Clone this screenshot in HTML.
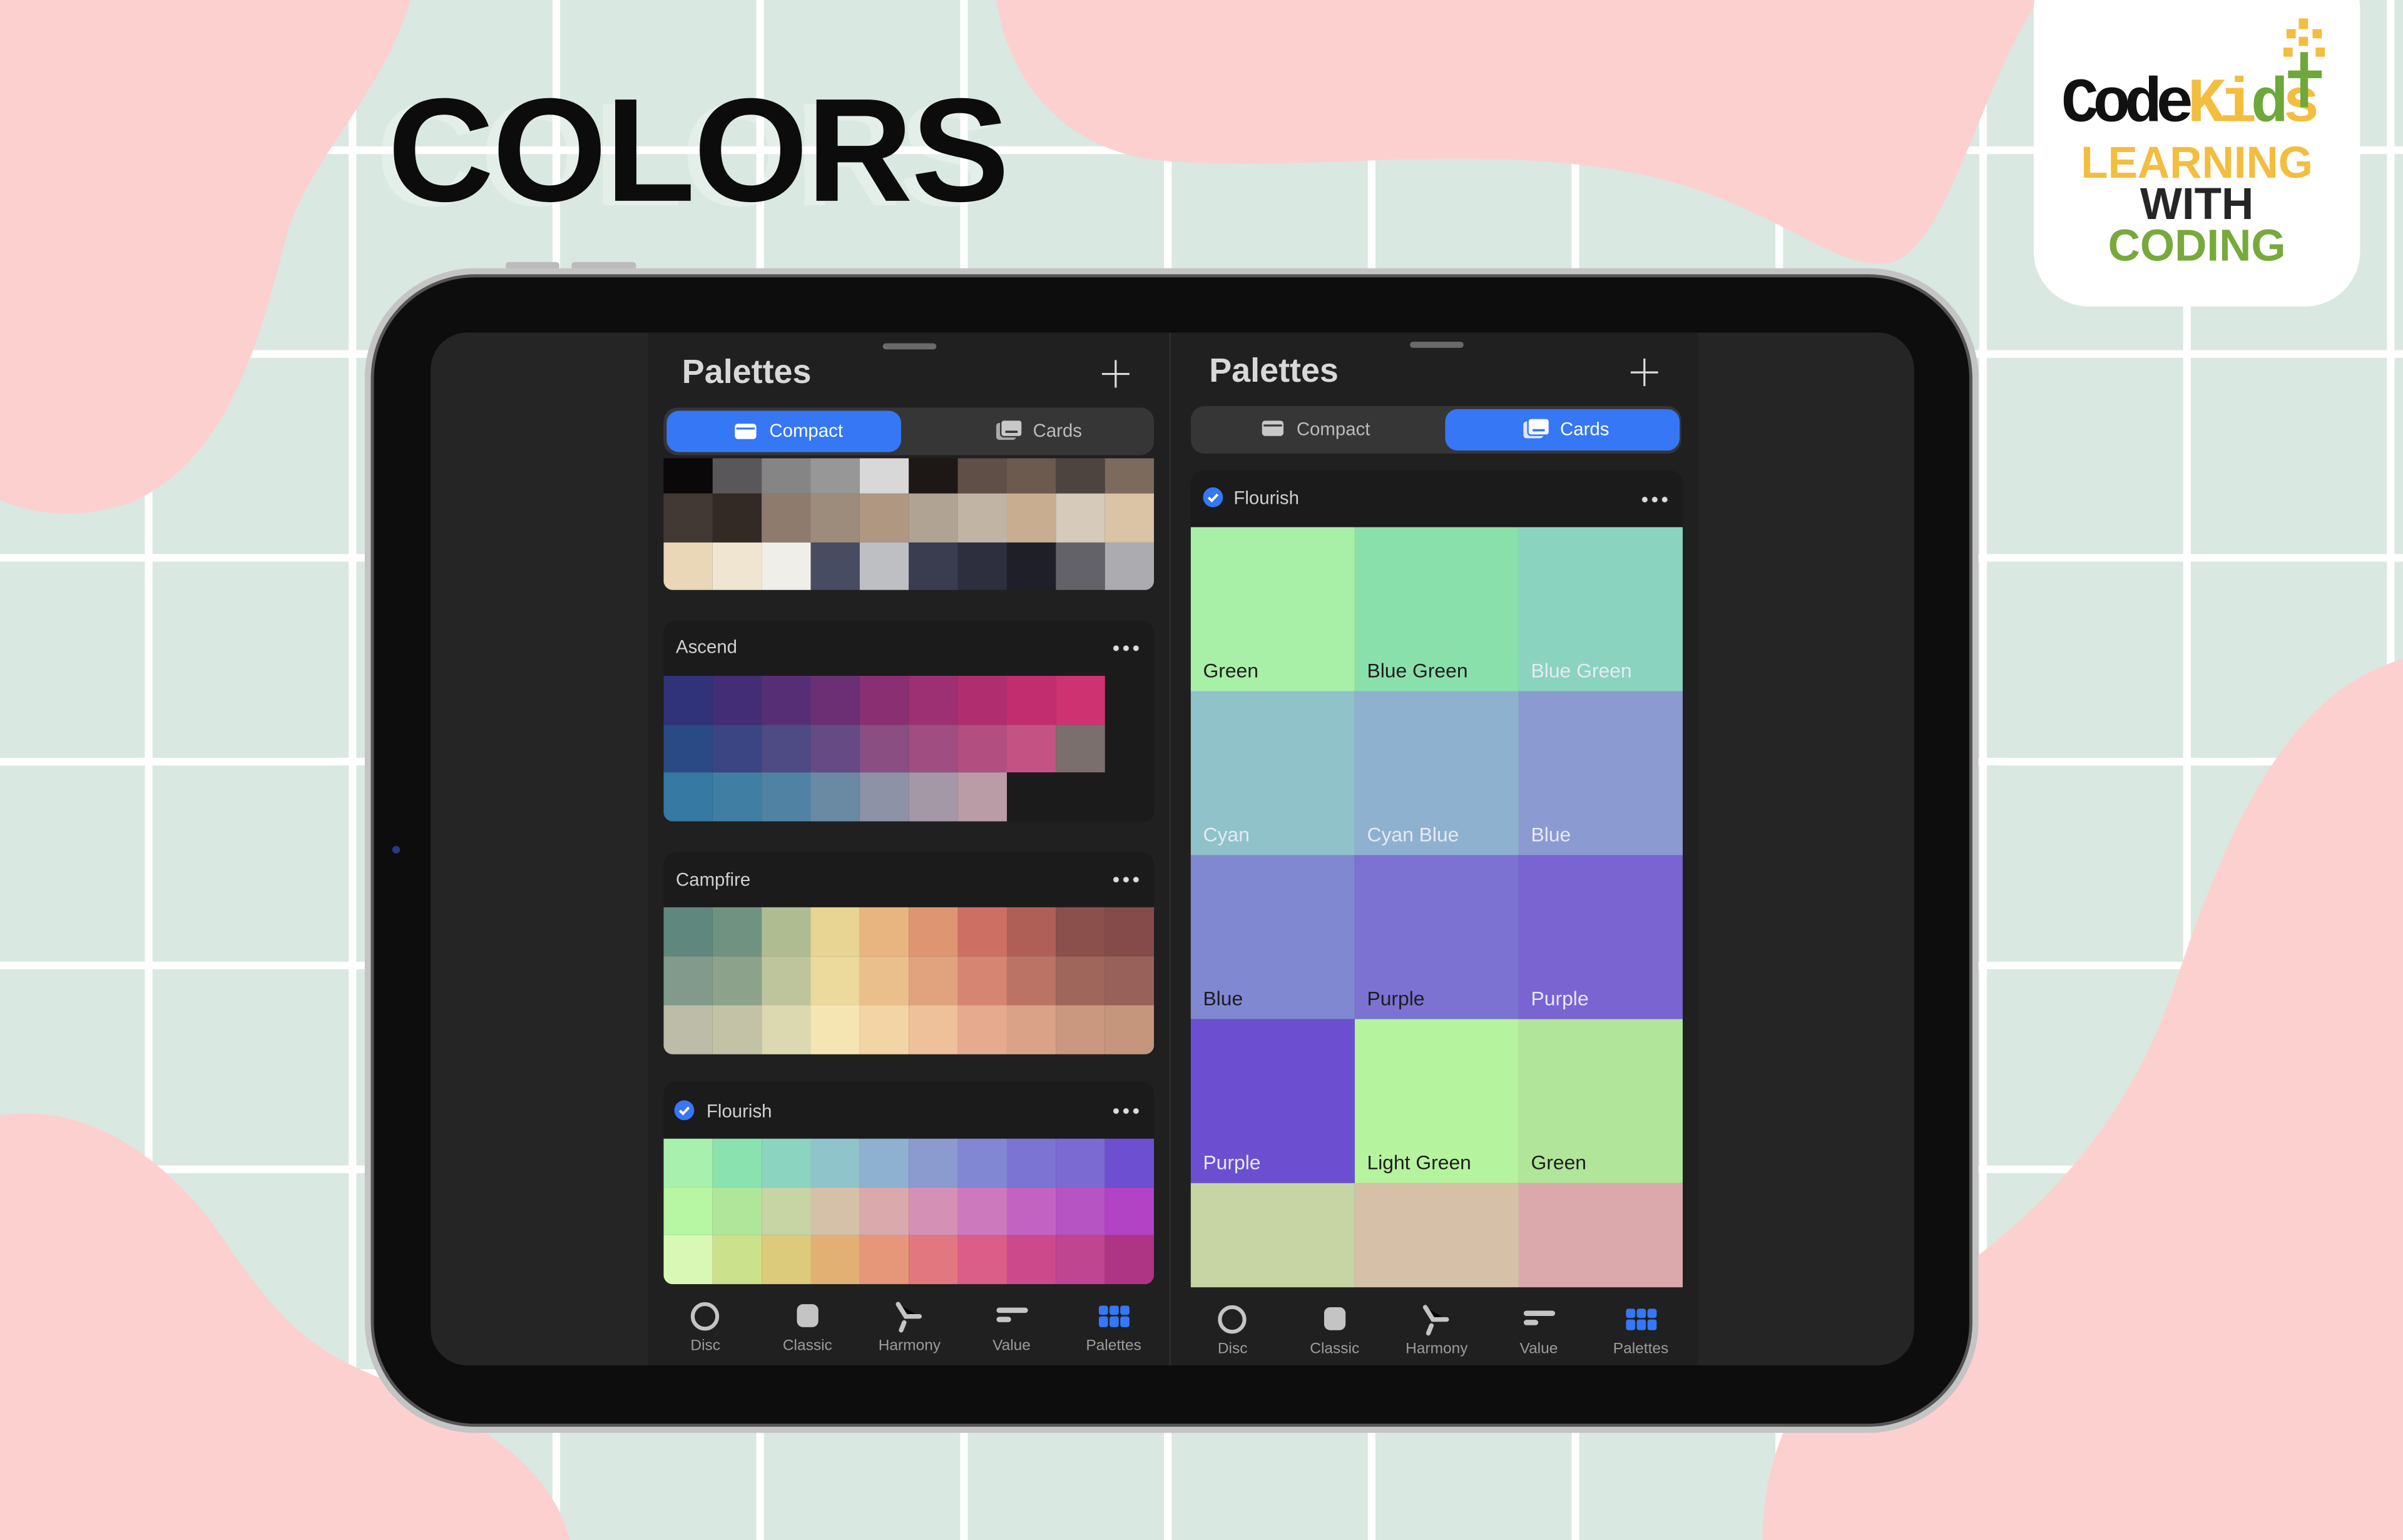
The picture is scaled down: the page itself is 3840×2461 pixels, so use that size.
<!DOCTYPE html>
<html><head><meta charset="utf-8"><style>
*{margin:0;padding:0;box-sizing:border-box}
html,body{width:3840px;height:2460px;overflow:hidden;background:#d9e8e0}
#w{position:absolute;left:0;top:0;width:1568px;height:1005px;transform:scale(2.44898);transform-origin:0 0;font-family:"Liberation Sans",sans-serif;overflow:hidden}
.a{position:absolute}
.g{position:absolute;display:grid;grid-template-columns:repeat(10,1fr);overflow:hidden;border-radius:0 0 6px 6px}
.hd{position:absolute;background:#1b1b1b;border-radius:8px 8px 0 0;color:#d0d0d0;font-size:12px}
.dots{position:absolute;right:9px;top:50%;margin-top:-2px;width:19px;height:4px;background:radial-gradient(circle,#ddd 1.6px,transparent 2px) 0 0/6.5px 4px repeat-x}
.nav{position:absolute;display:flex;justify-content:space-around;color:#9c9c9c;font-size:10px;text-align:center}
.nav div{width:60px;display:flex;flex-direction:column;align-items:center}
.nav svg{height:22px;margin-bottom:3px}
.cd{position:relative;font-size:13px;color:#1d1d1d}
.cd span{position:absolute;left:8px;bottom:6px}
.lt{color:#e6e9f5!important}
</style></head><body><div id="w">
<svg class="a" style="left:0;top:0" width="1568" height="1005" viewBox="0 0 1568 1005">
<g stroke="#fff" stroke-width="5">
<path d="M97 0V1005M230 0V1005M363 0V1005M496 0V1005M629 0V1005M762 0V1005M895 0V1005M1028 0V1005M1161 0V1005M1294 0V1005M1427 0V1005M1560 0V1005"/>
<path d="M0 98H1568M0 231H1568M0 364H1568M0 497H1568M0 630H1568M0 763H1568M0 896H1568"/>
</g>
<g fill="#fdd0d0">
<path d="M0,0 L268,0 C250,60 205,100 188,150 C170,220 150,300 85,328 C45,342 12,332 0,326 Z"/>
<path d="M650,0 C660,60 700,100 760,105 C850,112 950,95 1050,110 C1150,125 1190,175 1230,172 C1270,168 1290,60 1330,0 Z"/>
<path d="M1568,430 C1500,450 1460,520 1420,640 C1380,760 1300,820 1200,880 C1160,920 1150,970 1150,1005 L1568,1005 Z"/>
<path d="M0,728 C60,718 110,760 140,800 C180,860 200,880 250,900 C320,930 360,960 372,1005 L0,1005 Z"/>
</g>
</svg>
<div class="a" style="left:253px;top:44px;font-size:96px;font-weight:bold;letter-spacing:-1px;color:#0c0c0c;text-shadow:-8px 3px 0 rgba(255,255,255,.3)">COLORS</div>
<!-- logo -->
<div class="a" style="left:1327px;top:-30px;width:213px;height:230px;background:#fff;border-radius:36px"></div>
<div class="a" style="left:1345px;top:46px;font-family:'Liberation Mono',monospace;font-weight:bold;font-size:41px;letter-spacing:-4px;line-height:46px"><span style="color:#111">Code</span><span style="color:#f3bd3f">Ki</span><span style="color:#6ea73a">d</span><span style="color:#f3bd3f">s</span></div>
<svg class="a" style="left:1484px;top:10px" width="40" height="60"><g fill="#f3bd3f"><rect x="16" y="2" width="6" height="7"/><rect x="8" y="9" width="6" height="6"/><rect x="25" y="9" width="6" height="6"/><rect x="16" y="14" width="6" height="6"/><rect x="6" y="21" width="6" height="6"/><rect x="27" y="21" width="6" height="6"/></g><rect x="17" y="24" width="5" height="36" fill="#6ea73a"/><rect x="9" y="36" width="22" height="5" fill="#6ea73a"/></svg>
<div class="a" style="left:1327px;width:213px;top:94px;text-align:center;font-weight:bold;font-size:29px;line-height:27px"><div style="color:#f3bd3f">LEARNING</div><div style="color:#262626">WITH</div><div style="color:#78a93c">CODING</div></div>
<!-- ipad -->
<div class="a" style="left:330px;top:171px;width:35px;height:5px;background:#bbb;border-radius:2px"></div>
<div class="a" style="left:373px;top:171px;width:42px;height:5px;background:#bbb;border-radius:2px"></div>
<div class="a" style="left:238px;top:175px;width:1053px;height:760px;border-radius:72px;background:#0d0d0d;border:4px solid #c4c4c4;box-shadow:inset 0 0 0 2px #555"></div>
<div class="a" style="left:256px;top:552px;width:5px;height:5px;border-radius:50%;background:#2a3a8a"></div>
<div class="a" style="left:281px;top:217px;width:968px;height:674px;border-radius:24px;background:#252525;overflow:hidden">
 <div class="a" style="left:142px;top:0;width:685px;height:674px;background:#202020"></div>
 <div class="a" style="left:482px;top:0;width:1px;height:674px;background:#2e2e2e"></div>
</div>
<!-- LEFT PANEL -->
<div class="a" style="left:576px;top:224px;width:35px;height:4px;border-radius:2px;background:#6a6a6a"></div>
<div class="a" style="left:445px;top:230px;font-size:22px;font-weight:bold;color:#d8d8d8">Palettes</div>
<svg class="a" style="left:719px;top:235px" width="18" height="18"><path d="M9 0V18M0 9H18" stroke="#ddd" stroke-width="1.3"/></svg>
<div class="a" style="left:433px;top:266px;width:320px;height:31px;border-radius:9px;background:#363636"></div>
<div class="a" style="left:435px;top:268px;width:153px;height:27px;border-radius:8px;background:#3577f5"></div>
<svg class="a" style="left:479px;top:276px" width="15" height="11"><rect x="0.5" y="0.5" width="14" height="10" rx="2" fill="#fff"/><rect x="1.5" y="3" width="12" height="1.3" fill="#3577f5"/></svg>
<div class="a" style="left:502px;top:274px;font-size:12px;color:#fff">Compact</div>
<svg class="a" style="left:650px;top:274px" width="17" height="14"><rect x="0" y="2" width="13" height="11" rx="2" fill="#aaa"/><rect x="3" y="0" width="14" height="11" rx="2" fill="#c8c8c8" stroke="#363636"/><rect x="6" y="7" width="8" height="1.5" fill="#363636"/></svg>
<div class="a" style="left:674px;top:274px;font-size:12px;color:#bbb">Cards</div>

<div class="g" style="left:433px;top:299px;width:320px;height:86px;grid-template-rows:23px 32px 31px">
<div style="background:#0b0809"></div><div style="background:#59575a"></div><div style="background:#858585"></div><div style="background:#979797"></div><div style="background:#d8d8d8"></div><div style="background:#1d1716"></div><div style="background:#604f46"></div><div style="background:#6c5a4f"></div><div style="background:#4d4440"></div><div style="background:#7c6a5d"></div>
<div style="background:#433934"></div><div style="background:#332925"></div><div style="background:#8f7b6d"></div><div style="background:#9d8b7c"></div><div style="background:#af9782"></div><div style="background:#b0a394"></div><div style="background:#c1b4a4"></div><div style="background:#c8ad90"></div><div style="background:#d6cbbb"></div><div style="background:#dbc3a5"></div>
<div style="background:#e9d7b8"></div><div style="background:#f0e5d0"></div><div style="background:#f0eee9"></div><div style="background:#484c63"></div><div style="background:#bebfc3"></div><div style="background:#3a3c50"></div><div style="background:#2d2e3e"></div><div style="background:#1f1f29"></div><div style="background:#636268"></div><div style="background:#acabb0"></div>
</div>

<div class="hd" style="left:433px;top:405px;width:320px;height:36px"><span class="a" style="left:8px;top:10px">Ascend</span><div class="dots"></div></div>
<div class="g" style="left:433px;top:441px;width:320px;height:95px;grid-template-rows:repeat(3,1fr);background:#1b1b1b">
<div style="background:#30337a"></div><div style="background:#432d76"></div><div style="background:#562e76"></div><div style="background:#6b2f74"></div><div style="background:#8a2f72"></div><div style="background:#9d3072"></div><div style="background:#b02e6f"></div><div style="background:#c22d70"></div><div style="background:#cf3270"></div><div></div>
<div style="background:#2a4a85"></div><div style="background:#3c4583"></div><div style="background:#4e4a83"></div><div style="background:#664a83"></div><div style="background:#8a4e83"></div><div style="background:#a04e82"></div><div style="background:#b24f80"></div><div style="background:#c45384"></div><div style="background:#7a6f6d"></div><div></div>
<div style="background:#3679a3"></div><div style="background:#407fa3"></div><div style="background:#5083a3"></div><div style="background:#6a89a3"></div><div style="background:#8e92a6"></div><div style="background:#a497a6"></div><div style="background:#b99ca6"></div><div></div><div></div><div></div>
</div>

<div class="hd" style="left:433px;top:556px;width:320px;height:36px"><span class="a" style="left:8px;top:11px">Campfire</span><div class="dots"></div></div>
<div class="g" style="left:433px;top:592px;width:320px;height:96px;grid-template-rows:repeat(3,1fr)">
<div style="background:#5f877d"></div><div style="background:#709281"></div><div style="background:#afbc91"></div><div style="background:#e8d493"></div><div style="background:#e8b47f"></div><div style="background:#de9672"></div><div style="background:#cd6f62"></div><div style="background:#b05f57"></div><div style="background:#8b4f4c"></div><div style="background:#844b4a"></div>
<div style="background:#819a8c"></div><div style="background:#8ca28b"></div><div style="background:#bec59c"></div><div style="background:#ecd99c"></div><div style="background:#ebbf8b"></div><div style="background:#e0a37e"></div><div style="background:#d58571"></div><div style="background:#bb7366"></div><div style="background:#9f665c"></div><div style="background:#98625a"></div>
<div style="background:#bcbca8"></div><div style="background:#c3c2a6"></div><div style="background:#dcd8b0"></div><div style="background:#f5e5b3"></div><div style="background:#f3d4a4"></div><div style="background:#eec19a"></div><div style="background:#e6ab8e"></div><div style="background:#daa388"></div><div style="background:#c9987e"></div><div style="background:#c5957c"></div>
</div>

<div class="hd" style="left:433px;top:706px;width:320px;height:37px"><svg class="a" style="left:7px;top:12px" width="13" height="13"><circle cx="6.5" cy="6.5" r="6.5" fill="#3577f5"/><path d="M3.6 6.7L5.7 8.7L9.5 4.6" stroke="#fff" stroke-width="1.6" fill="none"/></svg><span class="a" style="left:28px;top:12px">Flourish</span><div class="dots"></div></div>
<div class="g" style="left:433px;top:743px;width:320px;height:95px;grid-template-rows:repeat(3,1fr)">
<div style="background:#a8f0ae"></div><div style="background:#8ae2ae"></div><div style="background:#8ad4c0"></div><div style="background:#8fc4ca"></div><div style="background:#8fb1d1"></div><div style="background:#8b9bd0"></div><div style="background:#8187d2"></div><div style="background:#7b74d2"></div><div style="background:#7a6ad2"></div><div style="background:#6c50cf"></div>
<div style="background:#b7f6a2"></div><div style="background:#b0e69a"></div><div style="background:#c7d4a3"></div><div style="background:#d5c1a8"></div><div style="background:#daa9ac"></div><div style="background:#d491b5"></div><div style="background:#cc7abd"></div><div style="background:#c363c1"></div><div style="background:#b654c4"></div><div style="background:#b143c4"></div>
<div style="background:#d9f8b6"></div><div style="background:#cce18b"></div><div style="background:#dccb7b"></div><div style="background:#e3b073"></div><div style="background:#e6977a"></div><div style="background:#e17880"></div><div style="background:#da5e88"></div><div style="background:#cc4a8c"></div><div style="background:#bf4590"></div><div style="background:#ae3484"></div>
</div>

<div class="nav" style="left:427px;top:848px;width:333px">
<div><svg width="22" height="22"><circle cx="11" cy="11" r="8" stroke="#c4c4c4" stroke-width="2.5" fill="none"/></svg>Disc</div>
<div><svg width="22" height="22"><rect x="4" y="3" width="14" height="15" rx="4" fill="#c4c4c4"/></svg>Classic</div>
<div><svg width="22" height="22"><g stroke="#c4c4c4" stroke-width="3" stroke-linecap="round"><path d="M4 3L9 11H18"/><path d="M8 15L6 20"/></g></svg>Harmony</div>
<div><svg width="22" height="22"><g stroke="#c4c4c4" stroke-width="3.5" stroke-linecap="round"><path d="M3 7H20M3 13H9"/></g></svg>Value</div>
<div style="color:#9c9c9c"><svg width="22" height="22"><g fill="#3577f5"><rect x="1" y="4" width="6" height="6" rx="1.5"/><rect x="8" y="4" width="6" height="6" rx="1.5"/><rect x="15" y="4" width="6" height="6" rx="1.5"/><rect x="1" y="11" width="6" height="7" rx="1.5"/><rect x="8" y="11" width="6" height="7" rx="1.5"/><rect x="15" y="11" width="6" height="7" rx="1.5"/></g></svg>Palettes</div>
</div>

<!-- RIGHT PANEL -->
<div class="a" style="left:920px;top:223px;width:35px;height:4px;border-radius:2px;background:#6a6a6a"></div>
<div class="a" style="left:789px;top:229px;font-size:22px;font-weight:bold;color:#d8d8d8">Palettes</div>
<svg class="a" style="left:1064px;top:234px" width="18" height="18"><path d="M9 0V18M0 9H18" stroke="#ddd" stroke-width="1.3"/></svg>
<div class="a" style="left:777px;top:265px;width:320px;height:31px;border-radius:9px;background:#363636"></div>
<div class="a" style="left:943px;top:267px;width:153px;height:27px;border-radius:8px;background:#3577f5"></div>
<svg class="a" style="left:823px;top:274px" width="15" height="11"><rect x="0.5" y="0.5" width="14" height="10" rx="2" fill="#c8c8c8"/><rect x="1.5" y="3" width="12" height="1.3" fill="#363636"/></svg>
<div class="a" style="left:846px;top:273px;font-size:12px;color:#bbb">Compact</div>
<svg class="a" style="left:994px;top:273px" width="17" height="14"><rect x="0" y="2" width="13" height="11" rx="2" fill="#dde6ff"/><rect x="3" y="0" width="14" height="11" rx="2" fill="#fff" stroke="#3577f5"/><rect x="6" y="7" width="8" height="1.5" fill="#3577f5"/></svg>
<div class="a" style="left:1018px;top:273px;font-size:12px;color:#fff">Cards</div>

<div class="hd" style="left:777px;top:307px;width:321px;height:37px"><svg class="a" style="left:8px;top:11px" width="13" height="13"><circle cx="6.5" cy="6.5" r="6.5" fill="#3577f5"/><path d="M3.6 6.7L5.7 8.7L9.5 4.6" stroke="#fff" stroke-width="1.6" fill="none"/></svg><span class="a" style="left:28px;top:11px">Flourish</span><div class="dots"></div></div>
<div class="a" style="left:777px;top:344px;width:321px;height:496px;display:grid;grid-template-columns:repeat(3,1fr);grid-template-rows:107px 107px 107px 107px 68px">
<div class="cd" style="background:#a8f0a8"><span>Green</span></div>
<div class="cd" style="background:#8ae0ab"><span>Blue Green</span></div>
<div class="cd" style="background:#8ad4bf"><span class="lt">Blue Green</span></div>
<div class="cd" style="background:#8fc3c9"><span class="lt">Cyan</span></div>
<div class="cd" style="background:#8fb1d0"><span class="lt">Cyan Blue</span></div>
<div class="cd" style="background:#8b9ad0"><span class="lt">Blue</span></div>
<div class="cd" style="background:#8088d2"><span>Blue</span></div>
<div class="cd" style="background:#7b72d2"><span>Purple</span></div>
<div class="cd" style="background:#7a64d2"><span class="lt">Purple</span></div>
<div class="cd" style="background:#6b4fd0"><span class="lt">Purple</span></div>
<div class="cd" style="background:#b6f39e"><span>Light Green</span></div>
<div class="cd" style="background:#b0e59a"><span>Green</span></div>
<div style="background:#c6d5a3"></div><div style="background:#d6c1a8"></div><div style="background:#dba9ac"></div>
</div>

<div class="nav" style="left:771px;top:850px;width:333px">
<div><svg width="22" height="22"><circle cx="11" cy="11" r="8" stroke="#c4c4c4" stroke-width="2.5" fill="none"/></svg>Disc</div>
<div><svg width="22" height="22"><rect x="4" y="3" width="14" height="15" rx="4" fill="#c4c4c4"/></svg>Classic</div>
<div><svg width="22" height="22"><g stroke="#c4c4c4" stroke-width="3" stroke-linecap="round"><path d="M4 3L9 11H18"/><path d="M8 15L6 20"/></g></svg>Harmony</div>
<div><svg width="22" height="22"><g stroke="#c4c4c4" stroke-width="3.5" stroke-linecap="round"><path d="M3 7H20M3 13H9"/></g></svg>Value</div>
<div><svg width="22" height="22"><g fill="#3577f5"><rect x="1" y="4" width="6" height="6" rx="1.5"/><rect x="8" y="4" width="6" height="6" rx="1.5"/><rect x="15" y="4" width="6" height="6" rx="1.5"/><rect x="1" y="11" width="6" height="7" rx="1.5"/><rect x="8" y="11" width="6" height="7" rx="1.5"/><rect x="15" y="11" width="6" height="7" rx="1.5"/></g></svg>Palettes</div>
</div>
</div></body></html>
